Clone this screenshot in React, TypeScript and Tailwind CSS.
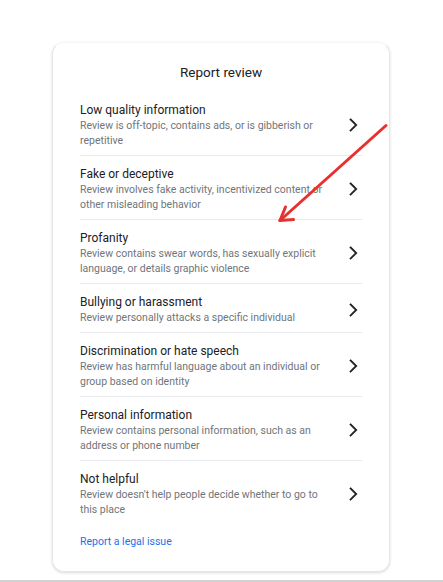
import React from "react";

const items = [
  {
    t: "Low quality information",
    d: "Review is off-topic, contains ads, or is gibberish or repetitive",
  },
  {
    t: "Fake or deceptive",
    d: "Review involves fake activity, incentivized content or other misleading behavior",
  },
  {
    t: "Profanity",
    d: "Review contains swear words, has sexually explicit language, or details graphic violence",
  },
  {
    t: "Bullying or harassment",
    d: "Review personally attacks a specific individual",
  },
  {
    t: "Discrimination or hate speech",
    d: "Review has harmful language about an individual or group based on identity",
  },
  {
    t: "Personal information",
    d: "Review contains personal information, such as an address or phone number",
  },
  {
    t: "Not helpful",
    d: "Review doesn't help people decide whether to go to this place",
  },
];

function Chevron() {
  return (
    <svg width="9" height="14" viewBox="0 0 9 14" className="shrink-0 mr-[4px]">
      <path
        d="M1.6 1.4 L7.2 7 L1.6 12.6"
        fill="none"
        stroke="#202124"
        strokeWidth="1.8"
        strokeLinecap="square"
        strokeLinejoin="miter"
      />
    </svg>
  );
}

export default function App() {
  return (
    <div
      className="relative w-[443px] h-[582px] bg-white flex flex-col overflow-hidden"
      style={{ fontFamily: "Roboto, 'Liberation Sans', Arial, sans-serif" }}
    >
      <div className="mt-[42px] ml-[52px] w-[338px] rounded-[12px] border border-[#e6e6e6] border-t-[#f7f7f7] bg-white shadow-[0_1px_3px_rgba(0,0,0,0.14)] px-[27px] pt-[19px] pb-[22px]">
        <div className="text-center text-[13.5px] leading-[20px] text-[#202124] mb-[10px]">
          Report review
        </div>
        {items.map((it, i) => (
          <div
            key={it.t}
            className={
              "flex items-center justify-between pt-[10px] pb-[7px] " +
              (i < items.length - 1 ? "border-b border-[#e8eaed]" : "")
            }
          >
            <div className="w-[252px]">
              <div className="text-[12px] leading-[16px] text-[#202124]">{it.t}</div>
              <div className="text-[10.5px] leading-[15px] text-[#70757a]">{it.d}</div>
            </div>
            <Chevron />
          </div>
        ))}
        <div className="mt-[10px] text-[10.5px] leading-[15px] text-[#1a73e8]">
          Report a legal issue
        </div>
      </div>
      <div className="flex-1" />
      <div className="h-[2px] bg-[#d2d2d2]" />
      <svg
        className="absolute left-0 top-0 pointer-events-none"
        width="443"
        height="582"
        viewBox="0 0 443 582"
      >
        <g stroke="#e8312f" strokeWidth="3" strokeLinecap="round" fill="none">
          <line x1="386" y1="125.5" x2="280" y2="220.5" />
          <line x1="280" y1="220.5" x2="285.5" y2="207" />
          <line x1="280" y1="220.5" x2="293.5" y2="219.5" />
        </g>
      </svg>
    </div>
  );
}
